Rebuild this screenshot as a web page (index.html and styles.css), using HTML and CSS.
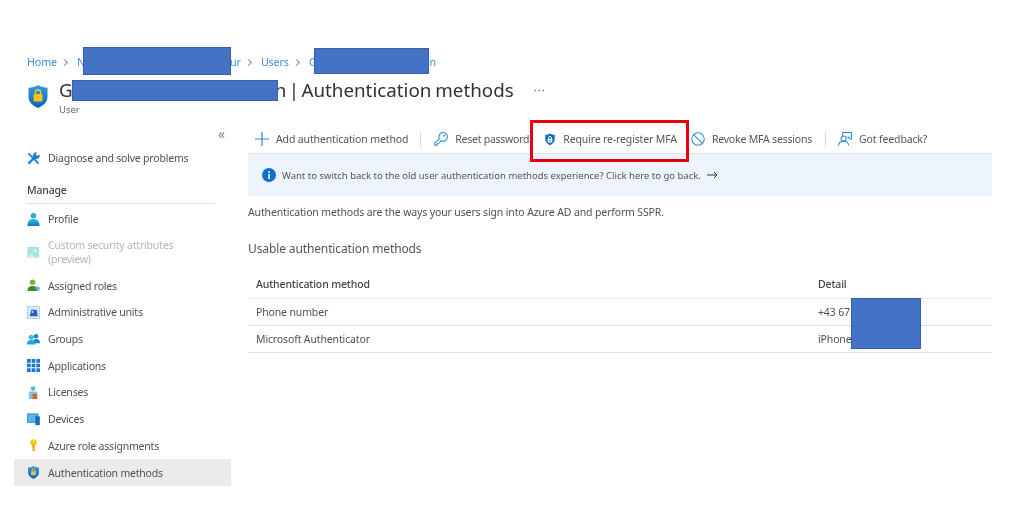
FILE: index.html
```html
<!DOCTYPE html>
<html lang="en">
<head>
<meta charset="utf-8">
<title>Authentication methods</title>
<link rel="stylesheet" href="styles.css">
</head>
<body>
<svg class="defs" width="0" height="0" aria-hidden="true">
  <defs>
    <linearGradient id="sh" x1="0" y1="0" x2="0" y2="1"><stop offset="0" stop-color="#2f9bea"/><stop offset="1" stop-color="#0f62b8"/></linearGradient>
    <linearGradient id="pp" x1="0" y1="0" x2="0" y2="1"><stop offset="0" stop-color="#35bfe0"/><stop offset="1" stop-color="#1178c8"/></linearGradient>
  </defs>
</svg>
<div class="page">
  <nav class="crumbs">
    <a>Home</a><i class="chev"></i>
    <a>N<span class="gap-a"></span>ur</a><i class="chev"></i>
    <a>Users</a><i class="chev"></i>
    <a>G<span class="gap-b"></span>n</a>
  </nav>
  <header class="head">
    <svg class="head-icon" viewBox="0 0 20 23"><path d="M10 0c3 2 6 2.700 9.500 2.700v9.300c0 5-4 8.500-9.500 11C4.500 20.500.5 17 .5 12V2.700C4 2.700 7 2 10 0z" fill="url(#sh)"/><rect x="5.500" y="9" width="9" height="7.500" rx="1" fill="#f5c61b"/><path d="M7.300 9.500V7.500a2.700 2.700 0 0 1 5.400 0v2" fill="none" stroke="#f5c61b" stroke-width="1.500"/></svg>
    <div class="head-text">
      <div class="head-row">
        <h1 class="title">G<span class="gap-c"></span><span class="tight">n | </span>Authentication methods</h1>
        <span class="more">···</span>
      </div>
      <div class="sub">User</div>
    </div>
  </header>
  <div class="body">
    <aside class="side">
      <div class="collapse">«</div>
      <div class="item"><svg class="ic" viewBox="0 0 14 14"><path d="M1.500 1.500L12.500 12.500" stroke="#1f8ad6" stroke-width="2.200" fill="none"/><path d="M1.500 12.500L9 5" stroke="#1f7fc9" stroke-width="2.400" fill="none"/><path d="M13.500 2.700A3.700 3.700 0 1 1 10.800 .3L9.400 2.500l1.700 1.700z" fill="#1f7fc9"/></svg><span>Diagnose and solve problems</span></div>
      <div class="group">Manage</div>
      <div class="item"><svg class="ic" viewBox="0 0 14 14"><circle cx="7" cy="3" r="3" fill="#2aa7dc"/><path d="M.5 14c0-5 2-7.500 6.500-7.500s6.500 2.500 6.500 7.500z" fill="url(#pp)"/></svg><span>Profile</span></div>
      <div class="item item-tall off"><svg class="ic" viewBox="0 0 14 14"><rect x=".5" y="1" width="12.500" height="11.500" fill="#a9e2dc"/><circle cx="9" cy="5" r="1.700" fill="#d8f3f0"/><path d="M1 12l4-4 3 4z" fill="#d8f3f0"/></svg><span>Custom security attributes (preview)</span></div>
      <div class="item"><svg class="ic" viewBox="0 0 14 14"><circle cx="6" cy="3.500" r="3" fill="#7cb82f"/><path d="M.5 13c0-4 2-5.500 5.500-5.500S11 9 11 13z" fill="#3f8a24"/><circle cx="11.500" cy="10.500" r="2.300" fill="#4db6e8"/></svg><span>Assigned roles</span></div>
      <div class="item"><svg class="ic" viewBox="0 0 14 14"><rect x=".5" y=".5" width="13" height="13" fill="#dbe9fb" stroke="#7fb2ea" stroke-dasharray="1.500 1"/><path d="M3 11l1.500-7h6l1 7z" fill="#2564b8"/><circle cx="6" cy="6.500" r="1" fill="#dbe9fb"/></svg><span>Administrative units</span></div>
      <div class="item"><svg class="ic" viewBox="0 0 14 14"><circle cx="9.700" cy="3.500" r="2.400" fill="#1c83cf"/><path d="M6 11c0-3 1.500-4.500 4-4.500s4 1.500 4 4.500z" fill="#1c83cf"/><circle cx="4.500" cy="4.500" r="2.700" fill="#35bfe0"/><path d="M0 12.500c0-3.500 1.500-5 4.500-5s4.500 1.500 4.500 5z" fill="#25a3dc"/></svg><span>Groups</span></div>
      <div class="item"><svg class="ic" viewBox="0 0 12 12"><path d="M0 0h3.400v3.400H0zM4.300 0h3.400v3.400H4.300zM8.600 0H12v3.400H8.600zM0 4.300h3.400v3.400H0zM4.300 4.300h3.400v3.400H4.300zM8.600 4.300H12v3.400H8.600zM0 8.600h3.400V12H0zM4.300 8.600h3.400V12H4.300zM8.600 8.600H12V12H8.600z" fill="#1a78d2"/></svg><span>Applications</span></div>
      <div class="item"><svg class="ic" viewBox="0 0 14 14"><circle cx="6.500" cy="2.800" r="2.500" fill="#5ab4dd"/><path d="M2 14V7.500c0-1 .7-1.500 1.500-1.500h6c1 0 1.500.6 1.500 1.500V14z" fill="#7cc1e6"/><rect x="6" y="8.500" width="5" height="5.500" fill="#d8651f"/></svg><span>Licenses</span></div>
      <div class="item"><svg class="ic" viewBox="0 0 14 14"><rect x=".3" y="1" width="11.500" height="9" fill="#59b2ea" stroke="#2d86d4"/><rect x="9" y="3.500" width="4.800" height="9.500" fill="#126fc4"/></svg><span>Devices</span></div>
      <div class="item"><svg class="ic" viewBox="0 0 14 14"><circle cx="7" cy="3.700" r="3.400" fill="#f8c312"/><path d="M5.700 6h2.600v8l-1.300-1-1.300-.5v-1l1-.6-1-.7z" fill="#efa80c"/><circle cx="7" cy="2.500" r=".8" fill="#fff"/></svg><span>Azure role assignments</span></div>
      <div class="item active"><svg class="ic" viewBox="0 0 14 15"><path d="M7 0c2 1.300 4 1.800 6.300 1.800v6C13.300 11 10.700 13.300 7 15 3.300 13.300.7 11 .7 7.800v-6C3 1.800 5 1.300 7 0z" fill="url(#sh)"/><rect x="4.300" y="6" width="5.400" height="4.500" fill="#f2c53a"/><path d="M5.300 6.500V5a1.700 1.700 0 0 1 3.400 0v1.500" fill="none" stroke="#f2c53a"/></svg><span>Authentication methods</span></div>
    </aside>
    <main class="main">
      <div class="bar">
        <button class="tool t-add"><svg class="ti" viewBox="0 0 14 14"><path d="M7 0v14M0 7h14" stroke="#2b88d8" stroke-width="1.200" fill="none"/></svg>Add authentication method</button>
        <i class="sep s1"></i>
        <button class="tool t-reset"><svg class="ti" viewBox="0 0 15 15"><path d="M5.700 7.300L.7 12.300V14.300H3.200V12.600H4.800L7.700 9.300A4.600 4.600 0 1 0 5.700 7.300z" fill="none" stroke="#2b88d8" stroke-width="1.100" stroke-linejoin="round"/><circle cx="11" cy="4" r="1" fill="#2b88d8"/></svg>Reset password</button>
        <button class="tool t-mfa"><svg class="ti ti-s" viewBox="0 0 11 13"><path d="M5.500 0c1.600 1 3.300 1.500 5.200 1.500V6c0 3-2 5.300-5.200 7C2.300 11.300.300 9 .300 6V1.500C2.200 1.500 3.900 1 5.500 0z" fill="#0f6fc6"/><rect x="3" y="5.800" width="5" height="4" rx=".5" fill="#fff"/><path d="M3.900 6V4.700a1.600 1.600 0 0 1 3.200 0V6" fill="none" stroke="#fff"/><circle cx="5.500" cy="7.800" r=".8" fill="#0f6fc6"/></svg>Require re-register MFA</button>
        <button class="tool t-revoke"><svg class="ti" viewBox="0 0 15 15"><circle cx="7.500" cy="7.500" r="6.700" fill="none" stroke="#2b88d8" stroke-width="1.100"/><path d="M2.800 2.800l9.400 9.400" stroke="#2b88d8" stroke-width="1.100"/></svg>Revoke MFA sessions</button>
        <i class="sep s2"></i>
        <button class="tool t-feed"><svg class="ti" viewBox="0 0 15 15"><path d="M5 4V.5h9.500v7H12" fill="none" stroke="#2b88d8" stroke-width="1.100"/><path d="M9.500 5.200h4l-2 2z" fill="#2b88d8"/><circle cx="6" cy="7" r="2.800" fill="none" stroke="#2b88d8" stroke-width="1.100"/><path d="M.5 14.500c.3-3 2.300-4.700 5.500-4.700s5.200 1.700 5.500 4.700" fill="none" stroke="#2b88d8" stroke-width="1.100"/></svg>Got feedback?</button>
      </div>
      <div class="banner">
        <svg class="info" viewBox="0 0 14 14"><circle cx="7" cy="7" r="7" fill="#0f6fd0"/><rect x="6.200" y="6" width="1.600" height="5" fill="#fff"/><circle cx="7" cy="3.900" r="1" fill="#fff"/></svg>
        <span>Want to switch back to the old user authentication methods experience? Click here to go back.</span>
        <svg class="arrow" viewBox="0 0 11 8"><path d="M0 4h10M7 1l3 3-3 3" fill="none" stroke="#333" stroke-width="1"/></svg>
      </div>
      <p class="desc">Authentication methods are the ways your users sign into Azure AD and perform SSPR.</p>
      <h2 class="section">Usable authentication methods</h2>
      <div class="table">
        <div class="row row-head"><span>Authentication method</span><span>Detail</span></div>
        <div class="row"><span>Phone number</span><span>+43 67</span></div>
        <div class="row"><span>Microsoft Authenticator</span><span>iPhone</span></div>
      </div>
    </main>
  </div>
</div>
<div class="redact r1"></div>
<div class="redact r2"></div>
<div class="redact r3"></div>
<div class="redact r4"></div>
<div class="callout"></div>
</body>
</html>
```
FILE: styles.css
```css
* { box-sizing: border-box; }
html, body { margin: 0; padding: 0; background: #fff; }
body { position: relative; width: 1024px; height: 515px; overflow: hidden; font-family: "Noto Sans", "Open Sans", sans-serif; color: #505050; }
.defs { position: absolute; }
.page { padding: 54px 32px 0 14px; filter: blur(0.45px); }

.crumbs { display: flex; align-items: center; height: 16px; padding-left: 13px; font-size: 10.700px; letter-spacing: -0.1px; color: #3f8fdc; white-space: nowrap; }
.chev { width: 5px; height: 5px; margin: 0 10px 0 5px; border-top: 1px solid #888; border-right: 1px solid #888; transform: rotate(45deg); }
.gap-a { display: inline-block; width: 145px; }
.gap-b { display: inline-block; width: 113px; }

.head { display: flex; height: 46px; padding: 6px 0 0 14px; }
.head-icon { width: 20px; height: 23px; margin: 9px 11px 0 0; flex: none; }
.head-text { display: flex; flex-direction: column; }
.head-row { display: flex; align-items: center; height: 27px; }
.title { margin: 0; font-size: 18.800px; font-weight: 400; word-spacing: -1px; color: #323130; white-space: pre; }
.tight { word-spacing: -2.500px; }
.gap-c { display: inline-block; width: 202px; }
.more { margin-left: 20px; font-size: 11px; letter-spacing: 1px; color: #555; }
.sub { font-size: 9.500px; line-height: 13px; color: #666; }

.body { display: flex; margin-top: 7px; }
.side { width: 217px; flex: none; margin-right: 17px; padding-top: 2px; font-size: 10.500px; letter-spacing: -0.2px; }
.collapse { height: 20px; padding-right: 6px; text-align: right; font-size: 14px; line-height: 18px; color: #888; }
.item { display: flex; align-items: center; height: 26.700px; padding-left: 13px; }
.ic { width: 13px; height: 13px; margin-right: 8px; flex: none; }
.item-tall { height: 40px; line-height: 14px; }
.item-tall span { width: 150px; }
.off { color: #b5b5b5; }
.active { background: #edebe9; }
.group { margin: 10px 16px 2px 13px; height: 22px; line-height: 17px; font-weight: 500; color: #444; border-bottom: 1px solid #ddd; }

.main { flex: 1; min-width: 0; font-size: 10.500px; letter-spacing: -0.14px; }
.bar { display: flex; align-items: center; height: 31px; padding: 2px 0 0 7px; border-bottom: 1px solid #e3e3e3; }
.tool { display: flex; align-items: center; height: 24px; padding: 0; border: 0; background: none; font: inherit; letter-spacing: inherit; color: #555; white-space: nowrap; }
.ti { width: 14px; height: 14px; margin-right: 7px; flex: none; }
.ti-s { width: 10px; height: 13px; margin-right: 8px; }
.sep { width: 1px; height: 15px; background: #d8d8d8; flex: none; }
.s1 { margin: 0 13px 0 12px; }
.t-reset { letter-spacing: -0.25px; }
.t-mfa { margin-left: 16px; }
.t-revoke { margin-left: 14px; letter-spacing: -0.2px; }
.s2 { margin: 0 12px 0 13px; }

.banner { display: flex; align-items: center; height: 42px; padding-left: 14px; background: #eef4fd; font-size: 9.500px; letter-spacing: 0; color: #555; }
.info { width: 14px; height: 14px; margin-right: 6px; flex: none; }
.arrow { width: 11px; height: 8px; margin-left: 6px; }
.desc { margin: 9px 0 0; line-height: 15px; }
.section { margin: 20px 0 0; font-size: 12px; letter-spacing: -0.12px; line-height: 18px; font-weight: 400; color: #555; }
.table { margin-top: 13px; }
.row { display: grid; grid-template-columns: 562px 1fr; align-items: center; height: 27px; padding-left: 8px; border-bottom: 1px solid #ddd; }
.row-head { height: 28px; padding-bottom: 2px; font-weight: 500; color: #444; border-bottom-color: #eee; }

.redact { position: absolute; background: #4472c4; border: 1px solid #3660a8; }
.r1 { left: 83px; top: 47px; width: 148px; height: 28px; }
.r2 { left: 72px; top: 80px; width: 206px; height: 21px; }
.r3 { left: 314px; top: 48px; width: 115px; height: 26px; }
.r4 { left: 851px; top: 298px; width: 70px; height: 51px; }
.callout { position: absolute; left: 530px; top: 120px; width: 159px; height: 42px; border: 3.500px solid #e8000d; }
```
